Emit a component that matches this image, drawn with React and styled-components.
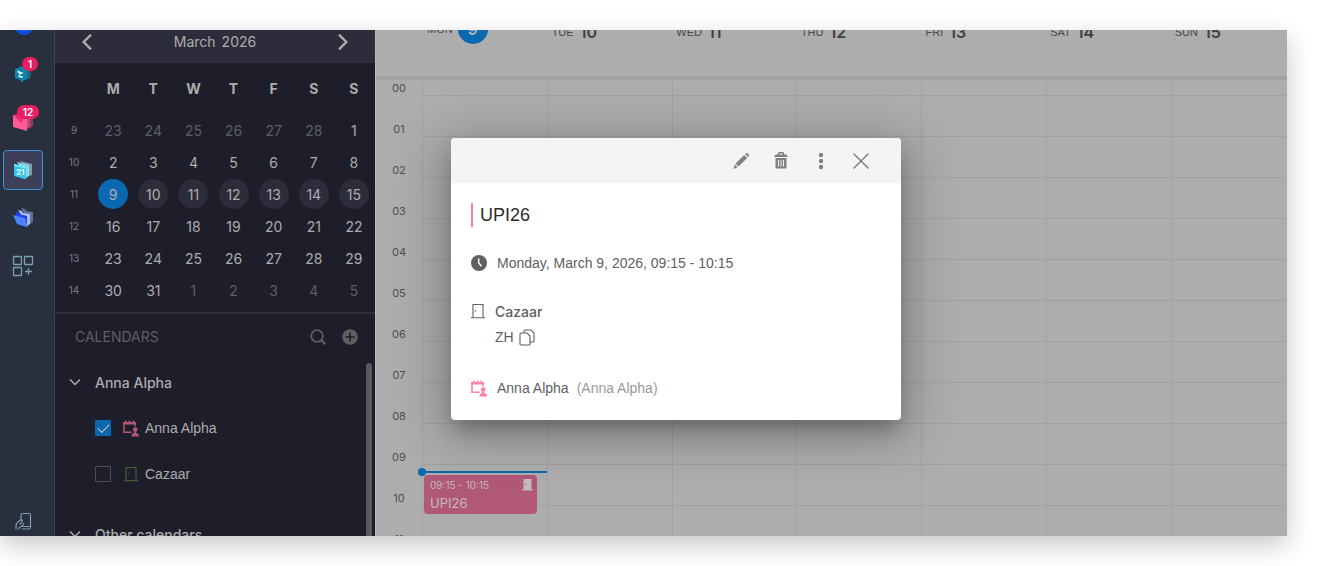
import React, { useState } from "react";
import styled, { createGlobalStyle } from "styled-components";

const weekDays = ["M", "T", "W", "T", "F", "S", "S"];

const weeks = [
  { number: 9, days: [23, 24, 25, 26, 27, 28, 1] },
  { number: 10, days: [2, 3, 4, 5, 6, 7, 8] },
  { number: 11, days: [9, 10, 11, 12, 13, 14, 15] },
  { number: 12, days: [16, 17, 18, 19, 20, 21, 22] },
  { number: 13, days: [23, 24, 25, 26, 27, 28, 29] },
  { number: 14, days: [30, 31, 1, 2, 3, 4, 5] },
];

const columns = [
  { name: "MON", date: 9, today: true },
  { name: "TUE", date: 10 },
  { name: "WED", date: 11 },
  { name: "THU", date: 12 },
  { name: "FRI", date: 13 },
  { name: "SAT", date: 14 },
  { name: "SUN", date: 15 },
];

const hours = Array.from({ length: 24 }, (_, i) => String(i).padStart(2, "0"));

const isOtherMonth = (week, day) =>
  (week === 9 && day > 20) || (week === 14 && day < 20);

/* icons */

const BlobIcon = () => (
  <svg width="20" height="20" viewBox="0 0 20 20">
    <circle cx="11" cy="10.500" r="8.500" fill="#1a6dff" />
    <path d="M3 13a8.500 8.500 0 0 0 16 0 18 18 0 0 1-16 0z" fill="#0a4be0" />
  </svg>
);

const ChatIcon = () => (
  <svg width="20" height="20" viewBox="0 0 20 20">
    <path d="M10 2l8 2v10l-3 1-5-2z" fill="#1f5f78" />
    <path d="M7 2l8 3v10l-4 1-5-3z" fill="#1f7796" />
    <path d="M2 5l6-2 5 3v10l-3 .5L9.500 19 7 16l-5-2z" fill="#0a86ab" />
    <path
      d="M4.500 7.500l4 1.500-2.500 1M5.500 12l4 1.200"
      stroke="#fff"
      strokeWidth="1.500"
      fill="none"
    />
  </svg>
);

const MailIcon = () => (
  <svg width="22" height="20" viewBox="0 0 22 20">
    <path d="M9 2h12v12l-3 2z" fill="#8c3f63" />
    <path d="M7 2h11v13l-3 2z" fill="#c04a7c" />
    <path d="M1 3l14-1v17L1 15z" fill="#ff5c95" />
    <path d="M1 3l14-1-6 9z" fill="#f02c74" />
  </svg>
);

const CalendarAppIcon = () => (
  <svg width="20" height="20" viewBox="0 0 20 20">
    <path d="M7 1l12 3v11l-3 1z" fill="#7d9fb2" />
    <path d="M4 2l12 3v11l-3 2z" fill="#8ad9e6" />
    <path d="M1 4l12 2.500v13L1 16z" fill="#2bc8ea" />
    <path d="M1 4l12 2.500v2L1 6z" fill="#7be6f7" />
    <text
      x="3"
      y="15"
      fill="#fff"
      fontSize="8"
      fontWeight="700"
      fontFamily="Inter, sans-serif"
    >
      21
    </text>
  </svg>
);

const FolderIcon = () => (
  <svg width="22" height="22" viewBox="0 0 22 22">
    <path d="M9 1l4 1 1 2 7 1v10l-3 2z" fill="#5f7099" />
    <path d="M6 3l4 1 1 2 7 1v10l-3 2z" fill="#a9bbe8" />
    <path d="M4 5l4 1 1 1.500 6 1.500v11L4 15z" fill="#1f45f0" />
    <path d="M1 8l11 3 1 .5 3 9-11-3.500z" fill="#4f82ff" />
  </svg>
);

const AppsIcon = () => (
  <svg
    width="22"
    height="22"
    viewBox="0 0 22 22"
    fill="none"
    stroke="#7d9db5"
    strokeWidth="1.300"
  >
    <rect x="1.500" y="1.500" width="8" height="8" rx=".5" />
    <rect x="12.500" y="1.500" width="8" height="8" rx=".5" />
    <rect x="1.500" y="12.500" width="8" height="8" rx=".5" />
    <path d="M16.500 13v7M13 16.500h7" />
  </svg>
);

const PhoneIcon = () => (
  <svg
    width="18"
    height="18"
    viewBox="0 0 18 18"
    fill="none"
    stroke="#7d9db5"
    strokeWidth="1.200"
    strokeLinejoin="round"
    strokeLinecap="round"
  >
    <path d="M7 8V3a1.500 1.500 0 0 1 1.500-1.500H15A1.500 1.500 0 0 1 16.500 3v12.500a1.500 1.500 0 0 1-1.500 1.500H8" />
    <path d="M8.500 14.500h8" />
    <path d="M2 17v-3.500c0-2 1-3 2.500-4L6.500 8c1.500-.5 2.500.5 1.500 1.800L6 12" />
    <path d="M4.500 17c0-1.500 1-1.800 2.500-2.500 1.200-.5 2-1.500 2.500-3" />
  </svg>
);

const Chevron = ({ d, size = 12, width = 1.5 }) => (
  <svg
    width={size}
    height={size}
    viewBox="0 0 12 12"
    fill="none"
    stroke="currentColor"
    strokeWidth={width}
  >
    <path d={d} />
  </svg>
);

const SearchIcon = () => (
  <svg
    width="16"
    height="16"
    viewBox="0 0 16 16"
    fill="none"
    stroke="currentColor"
    strokeWidth="1.800"
  >
    <circle cx="7" cy="7" r="5.800" />
    <path d="M11 11l4.300 4.300" strokeWidth="2.200" />
  </svg>
);

const AddIcon = () => (
  <svg width="16" height="16" viewBox="0 0 16 16">
    <circle cx="8" cy="8" r="7.800" fill="currentColor" />
    <path d="M8 3.500v9M3.500 8h9" stroke="#1d1e2a" strokeWidth="1.600" />
  </svg>
);

const PersonCalendarIcon = () => (
  <svg width="16" height="17" viewBox="0 0 16 17">
    <path
      d="M1 3v9.300h7.500M1 3h11v3.500"
      fill="none"
      stroke="currentColor"
      strokeWidth="1.500"
    />
    <path
      d="M0 2h13v2.500H0zM2 .5h1.500V3H2zM5.700.5h1.500V3H5.700zM9.700.5h1.500V3H9.700z"
      fill="currentColor"
    />
    <circle cx="12.200" cy="9.600" r="2.400" fill="currentColor" />
    <path
      d="M11.200 11.500h2v1.500c1.800.2 2.800 1 2.800 3.500H8.500c0-2.500 1-3.300 2.700-3.500z"
      fill="currentColor"
    />
  </svg>
);

const DoorIcon = () => (
  <svg width="14" height="16" viewBox="0 0 14 16">
    <path
      d="M2 14.500V1.500h10v13"
      fill="none"
      stroke="currentColor"
      strokeWidth="1.100"
    />
    <path d="M0 14.700h14" stroke="currentColor" strokeWidth="1.100" />
    <circle cx="4.500" cy="8" r=".8" fill="currentColor" />
  </svg>
);

const RoomIcon = () => (
  <svg width="11" height="13" viewBox="0 0 11 13" fill="currentColor">
    <path d="M1.500 1h8v10.500H11v1H0v-1h1.500z" />
    <circle cx="3.500" cy="6.500" r=".8" fill="#b15777" />
  </svg>
);

const ClockIcon = () => (
  <svg width="16" height="16" viewBox="0 0 16 16">
    <circle cx="8" cy="8" r="8" fill="currentColor" />
    <path d="M7.700 3.500V8l3 3.300" fill="none" stroke="#fff" strokeWidth="1.400" />
  </svg>
);

const CopyIcon = () => (
  <svg
    width="16"
    height="17"
    viewBox="0 0 16 17"
    fill="none"
    stroke="currentColor"
    strokeWidth="1.100"
  >
    <path d="M5 4V2a1 1 0 0 1 1-1h6l3 3v8a1 1 0 0 1-1 1h-3" />
    <path d="M2 4h6l3 3v8a1 1 0 0 1-1 1H2a1 1 0 0 1-1-1V5a1 1 0 0 1 1-1z" />
  </svg>
);

const PencilIcon = () => (
  <svg width="16" height="16" viewBox="0 0 16 16" fill="currentColor">
    <path d="M12 1l.7-.6a1.400 1.400 0 0 1 2 0l1 1a1.400 1.400 0 0 1 0 2L15 4.100zM11.200 1.900l3 3-8.700 8.700-3-3zM1.800 11.400l2.900 2.900L.3 15.900z" />
  </svg>
);

const TrashIcon = () => (
  <svg width="14" height="17" viewBox="0 0 14 17">
    <path
      d="M4.500 3V1.500A.8.800 0 0 1 5.300.8h3.400a.8.800 0 0 1 .8.700V3"
      fill="none"
      stroke="currentColor"
      strokeWidth="1.400"
    />
    <path
      d="M1.500 2.500h11L14 5H0zM1.500 6h11v9.300a1.200 1.200 0 0 1-1.200 1.200H2.700a1.200 1.200 0 0 1-1.200-1.200z"
      fill="currentColor"
    />
    <path d="M4.500 8v6.500M7 8v6.500M9.500 8v6.500" stroke="#f4f4f4" />
  </svg>
);

const MoreIcon = () => (
  <svg width="6" height="18" viewBox="0 0 6 18" fill="currentColor">
    <circle cx="3" cy="3" r="2.200" />
    <circle cx="3" cy="9" r="2.200" />
    <circle cx="3" cy="15" r="2.200" />
  </svg>
);

const CloseIcon = () => (
  <svg width="16" height="16" viewBox="0 0 16 16">
    <path
      d="M1 1l14 14M15 1L1 15"
      stroke="currentColor"
      strokeWidth="1.500"
      strokeLinecap="round"
    />
  </svg>
);

/* parts */

function Rail() {
  return (
    <StyledRail>
      <RailGroup>
        <RailButton aria-label="Home">
          <BlobIcon />
        </RailButton>
        <RailButton aria-label="Chat">
          <ChatIcon />
          <Badge>1</Badge>
        </RailButton>
        <RailButton aria-label="Mail">
          <MailIcon />
          <Badge $wide>12</Badge>
        </RailButton>
        <RailButton aria-label="Calendar" $active>
          <CalendarAppIcon />
        </RailButton>
        <RailButton aria-label="Files">
          <FolderIcon />
        </RailButton>
        <RailButton aria-label="Apps">
          <AppsIcon />
        </RailButton>
      </RailGroup>
      <RailButton aria-label="Mobile app">
        <PhoneIcon />
      </RailButton>
    </StyledRail>
  );
}

function MonthPicker() {
  return (
    <div>
      <MonthBar>
        <IconButton aria-label="Previous month">
          <Chevron d="M9 .5L3.500 6 9 11.500" size={16} width={1.8} />
        </IconButton>
        <MonthTitle>
          <span>March</span>
          <span>2026</span>
        </MonthTitle>
        <IconButton aria-label="Next month">
          <Chevron d="M3 .5L8.500 6 3 11.500" size={16} width={1.8} />
        </IconButton>
      </MonthBar>
      <MonthTable>
        <thead>
          <tr>
            <th className="week" />
            {weekDays.map((day, i) => (
              <th key={i}>{day}</th>
            ))}
          </tr>
        </thead>
        <tbody>
          {weeks.map((week) => (
            <tr key={week.number}>
              <td className="week">{week.number}</td>
              {week.days.map((day) => (
                <td key={day}>
                  <DayButton
                    $muted={isOtherMonth(week.number, day)}
                    $inWeek={week.number === 11}
                    $today={week.number === 11 && day === 9}
                  >
                    {day}
                  </DayButton>
                </td>
              ))}
            </tr>
          ))}
        </tbody>
      </MonthTable>
    </div>
  );
}

function CalendarList() {
  const [checked, setChecked] = useState({ anna: true, cazaar: false });
  const toggle = (key) => setChecked({ ...checked, [key]: !checked[key] });

  return (
    <StyledList>
      <ListHeader>
        <h2>CALENDARS</h2>
        <IconButton aria-label="Search">
          <SearchIcon />
        </IconButton>
        <IconButton aria-label="Add calendar">
          <AddIcon />
        </IconButton>
      </ListHeader>
      <ListBody>
        <div>
          <GroupButton>
            <Chevron d="M1 3.500l5 5 5-5" />
            Anna Alpha
          </GroupButton>
          <CalendarRow>
            <CheckBox
              type="checkbox"
              checked={checked.anna}
              onChange={() => toggle("anna")}
            />
            <CalendarIcon $color="#b15777">
              <PersonCalendarIcon />
            </CalendarIcon>
            Anna Alpha
          </CalendarRow>
          <CalendarRow>
            <CheckBox
              type="checkbox"
              checked={checked.cazaar}
              onChange={() => toggle("cazaar")}
            />
            <CalendarIcon $color="#44642f">
              <DoorIcon />
            </CalendarIcon>
            Cazaar
          </CalendarRow>
          <GroupButton $spaced>
            <Chevron d="M1 3.500l5 5 5-5" />
            Other calendars
          </GroupButton>
        </div>
        <ScrollThumb />
      </ListBody>
    </StyledList>
  );
}

function WeekView() {
  return (
    <StyledWeek>
      <WeekHeader>
        {columns.map((col) => (
          <DayHead key={col.name} $today={col.today}>
            {col.name}
            {col.today ? <TodayMark>{col.date}</TodayMark> : <b>{col.date}</b>}
          </DayHead>
        ))}
      </WeekHeader>
      <WeekBody>
        <Hours>
          {hours.map((hour) => (
            <span key={hour}>{hour}</span>
          ))}
        </Hours>
        <DayColumns>
          {columns.map((col) => (
            <DayColumn key={col.name}>
              {hours.map((hour) => (
                <Slot key={hour} />
              ))}
              {col.today && (
                <>
                  <NowLine />
                  <EventCard>
                    <div>
                      <small>09:15 - 10:15</small>
                      <span>UPI26</span>
                    </div>
                    <RoomIcon />
                  </EventCard>
                </>
              )}
            </DayColumn>
          ))}
        </DayColumns>
      </WeekBody>
      <EventPopup />
    </StyledWeek>
  );
}

function EventPopup() {
  return (
    <StyledPopup role="dialog" aria-label="UPI26">
      <PopupBar>
        <IconButton aria-label="Edit">
          <PencilIcon />
        </IconButton>
        <IconButton aria-label="Delete">
          <TrashIcon />
        </IconButton>
        <IconButton aria-label="More">
          <MoreIcon />
        </IconButton>
        <IconButton aria-label="Close">
          <CloseIcon />
        </IconButton>
      </PopupBar>
      <PopupContent>
        <PopupTitle>UPI26</PopupTitle>
        <PopupRow>
          <ClockIcon />
          Monday, March 9, 2026, 09:15 - 10:15
        </PopupRow>
        <PlaceRow>
          <DoorIcon />
          <div>
            <b>Cazaar</b>
            <div className="address">
              ZH
              <IconButton aria-label="Copy address">
                <CopyIcon />
              </IconButton>
            </div>
          </div>
        </PlaceRow>
        <PopupRow $pink>
          <PersonCalendarIcon />
          <span>Anna Alpha</span>
          <small>(Anna Alpha)</small>
        </PopupRow>
      </PopupContent>
    </StyledPopup>
  );
}

function App() {
  return (
    <Page>
      <GlobalStyle />
      <Frame>
        <Rail />
        <Sidebar>
          <MonthPicker />
          <CalendarList />
        </Sidebar>
        <WeekView />
      </Frame>
    </Page>
  );
}

export default App;

const displayFont = `Inter, "Liberation Sans", sans-serif`;

const GlobalStyle = createGlobalStyle`
  * {
    box-sizing: border-box;
  }
  body {
    margin: 0;
    background: #fff;
    font-family: "Liberation Sans", Arial, sans-serif;
    font-size: 14px;
  }
  button {
    font: inherit;
    color: inherit;
    background: none;
    border: 0;
    padding: 0;
    cursor: pointer;
  }
  svg {
    display: block;
    flex-shrink: 0;
  }
`;

const Page = styled.div`
  height: 100vh;
  padding: 30px 30px 30px 0;
  overflow: hidden;
`;

const Frame = styled.div`
  display: flex;
  height: 100%;
  overflow: hidden;
  box-shadow: 0 9px 24px rgba(0, 0, 0, 0.22);
`;

const StyledRail = styled.nav`
  display: flex;
  flex-direction: column;
  justify-content: space-between;
  flex-shrink: 0;
  width: 55px;
  margin: -24px 0 -5px;
  padding-left: 3px;
  background: #282f3d;
  border-right: 1px solid #3a4453;
`;

const RailGroup = styled.div`
  display: flex;
  flex-direction: column;
  gap: 8px;
`;

const RailButton = styled.button`
  position: relative;
  display: flex;
  align-items: center;
  justify-content: center;
  width: 40px;
  height: 40px;
  border-radius: 4px;
  border: 1px solid ${(props) => (props.$active ? "#3c93d8" : "transparent")};
  background: ${(props) => (props.$active ? "#3d3e58" : "none")};
`;

const Badge = styled.span`
  position: absolute;
  top: 2px;
  right: ${(props) => (props.$wide ? "3px" : "4px")};
  min-width: ${(props) => (props.$wide ? "22px" : "16px")};
  height: 14px;
  line-height: 14px;
  border-radius: 7px;
  background: #e91e63;
  color: #fff;
  font-family: ${displayFont};
  font-size: 10px;
  font-weight: 600;
  text-align: center;
`;

const Sidebar = styled.aside`
  display: flex;
  flex-direction: column;
  flex-shrink: 0;
  width: 320px;
  background: #1d1e2a;
  color: #acacac;
`;

const IconButton = styled.button`
  display: inline-flex;
  align-items: center;
  justify-content: center;
`;

const MonthBar = styled.div`
  display: flex;
  align-items: center;
  justify-content: space-between;
  height: 33px;
  padding: 0 24px 10px;
  background: #2c2c3b;
  font-family: ${displayFont};
`;

const MonthTitle = styled.div`
  display: flex;
  gap: 6px;
`;

const MonthTable = styled.table`
  width: 319px;
  table-layout: fixed;
  border-collapse: collapse;
  text-align: center;
  font-family: ${displayFont};
  th,
  td {
    width: 40px;
    height: 32px;
    padding: 0;
  }
  th {
    height: 51px;
    font-weight: 700;
  }
  .week {
    width: 38px;
    font-size: 10px;
    color: #7c7c80;
  }
`;

const DayButton = styled.button`
  width: 30px;
  height: 30px;
  border-radius: 50%;
  color: ${(props) => (props.$muted ? "#5d5e62" : "#acacac")};
  background: ${(props) =>
    props.$today ? "#0a68b0" : props.$inWeek ? "#2c2c3b" : "none"};
`;

const StyledList = styled.section`
  display: flex;
  flex-direction: column;
  flex: 1;
  min-height: 0;
  margin-top: 6px;
  border-top: 2px solid #2c2c3b;
`;

const ListHeader = styled.div`
  display: flex;
  align-items: center;
  gap: 16px;
  height: 45px;
  padding: 0 17px 0 20px;
  color: #5f5f60;
  h2 {
    flex: 1;
    margin: 0;
    font-family: ${displayFont};
    font-size: 14px;
    font-weight: 400;
  }
`;

const ListBody = styled.div`
  display: flex;
  justify-content: space-between;
  flex: 1;
  min-height: 0;
  padding-right: 3px;
`;

const GroupButton = styled.button`
  display: flex;
  align-items: center;
  gap: 14px;
  height: 46px;
  margin-top: ${(props) => (props.$spaced ? "14px" : "0")};
  padding-left: 14px;
  font-family: ${displayFont};
  font-weight: 500;
`;

const CalendarRow = styled.label`
  display: flex;
  align-items: center;
  height: 46px;
  padding-left: 40px;
`;

const CheckBox = styled.input`
  appearance: none;
  width: 16px;
  height: 16px;
  margin: 0 10px 0 0;
  border: 1px solid #4e4e50;
  border-radius: 1px;
  &:checked {
    border-color: #0a68b0;
    background: #0a68b0;
  }
  &:checked::after {
    content: "";
    display: block;
    width: 10px;
    height: 5px;
    margin: 3px 2px;
    border: solid #c4c4c4;
    border-width: 0 0 1px 1px;
    transform: rotate(-45deg);
  }
`;

const CalendarIcon = styled.span`
  display: flex;
  justify-content: center;
  width: 20px;
  margin-right: 4px;
  color: ${(props) => props.$color};
`;

const ScrollThumb = styled.div`
  width: 6px;
  margin-top: 4px;
  border-radius: 3px 3px 0 0;
  background: #5a5a5a;
`;

const StyledWeek = styled.main`
  position: relative;
  display: flex;
  flex-direction: column;
  flex: 1;
  min-width: 0;
  background: #adadad;
  border-left: 1px solid #b9b9b9;
`;

const WeekHeader = styled.div`
  display: grid;
  grid-template-columns: repeat(6, 12fr) 11fr;
  flex-shrink: 0;
  height: 50px;
  padding: 0 2px 0 47px;
  border-bottom: 4px solid #a2a2a2;
`;

const DayHead = styled.div`
  display: flex;
  align-items: center;
  gap: ${(props) => (props.$today ? "5px" : "6px")};
  height: 30px;
  margin-top: ${(props) => (props.$today ? "-16px" : "-13px")};
  padding-left: 4px;
  color: #4c4c4c;
  font-size: 11px;
  b {
    font-family: ${displayFont};
    font-size: 16px;
    font-weight: 600;
    color: #404040;
  }
`;

const TodayMark = styled.span`
  width: 30px;
  height: 30px;
  line-height: 30px;
  border-radius: 50%;
  background: #0a68b0;
  color: #b8b8b8;
  font-family: ${displayFont};
  font-size: 16px;
  font-weight: 600;
  text-align: center;
`;

const WeekBody = styled.div`
  display: flex;
  flex: 1;
  min-height: 0;
  padding-right: 2px;
  overflow: hidden;
`;

const Hours = styled.div`
  width: 46px;
  margin-top: -25px;
  span {
    display: flex;
    align-items: flex-end;
    justify-content: center;
    height: 41px;
    line-height: 16px;
    color: #4f4f4f;
    font-family: ${displayFont};
    font-size: 11px;
  }
`;

const DayColumns = styled.div`
  display: grid;
  grid-template-columns: repeat(6, 12fr) 11fr;
  flex: 1;
  margin-top: -25px;
`;

const DayColumn = styled.div`
  position: relative;
  border-left: 1px solid #a1a1a1;
`;

const Slot = styled.div`
  height: 41px;
  border-bottom: 1px solid #a1a1a1;
`;

/* 41px per hour, first hour line at 41px */
const NowLine = styled.div`
  position: absolute;
  top: 416px;
  left: 0;
  right: 0;
  height: 2px;
  background: #0a68b0;
  &::before {
    content: "";
    position: absolute;
    top: -3px;
    left: -5px;
    width: 8px;
    height: 8px;
    border-radius: 50%;
    background: #0a68b0;
  }
`;

const EventCard = styled.button`
  position: absolute;
  top: 420px;
  left: 1px;
  right: 10px;
  display: flex;
  justify-content: space-between;
  height: 39px;
  padding: 3px 4px 3px 6px;
  border-radius: 4px;
  background: #b15777;
  color: #c4bcbf;
  text-align: left;
  small,
  span {
    display: block;
    font-family: ${displayFont};
    font-size: 10px;
    line-height: 15px;
  }
  span {
    font-size: 13px;
    line-height: 20px;
  }
`;

const StyledPopup = styled.div`
  position: absolute;
  top: 108px;
  left: 75px;
  width: 450px;
  border-radius: 4px;
  overflow: hidden;
  background: #fff;
  color: #606060;
  box-shadow: 0 12px 20px -4px rgba(0, 0, 0, 0.25),
    0 10px 50px 8px rgba(0, 0, 0, 0.25);
`;

const PopupBar = styled.div`
  display: flex;
  align-items: center;
  justify-content: flex-end;
  height: 45px;
  padding: 0 20px 0 0;
  background: #f4f4f4;
  color: #808080;
  button {
    width: 40px;
    height: 40px;
  }
`;

const PopupContent = styled.div`
  padding: 20px;
`;

const PopupTitle = styled.h1`
  margin: 0 0 24px;
  padding-left: 7px;
  border-left: 2px solid #ff80ab;
  color: #2c2c2c;
  font-size: 18px;
  font-weight: 400;
  line-height: 24px;
`;

const PopupRow = styled.div`
  display: flex;
  align-items: center;
  line-height: 24px;
  svg {
    margin-right: 10px;
    color: ${(props) => (props.$pink ? "#ff80ab" : "#606060")};
  }
  small {
    margin-left: 8px;
    color: #999;
    font-size: 14px;
  }
`;

const PlaceRow = styled.div`
  display: flex;
  gap: 10px;
  margin: 24px 0 26px;
  line-height: 25px;
  > svg {
    margin-top: 4px;
  }
  b {
    font-family: ${displayFont};
    font-weight: 500;
  }
  .address {
    display: flex;
    align-items: center;
    gap: 5px;
  }
`;
